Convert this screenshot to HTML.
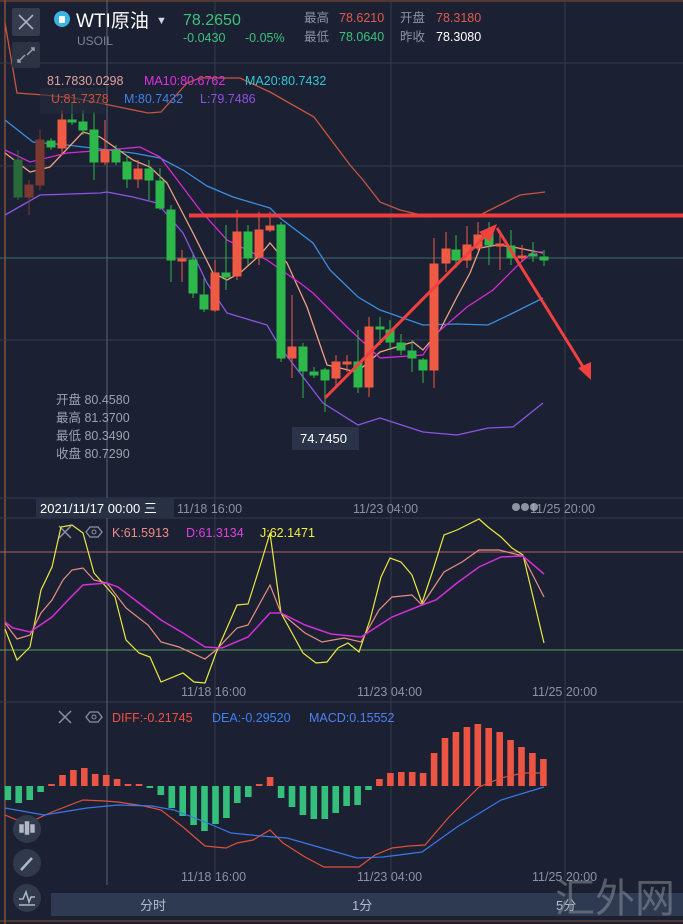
<!DOCTYPE html>
<html><head><meta charset="utf-8"><style>
html,body{margin:0;padding:0;background:#1b2132;width:683px;height:924px;overflow:hidden}
svg{display:block}
text{font-family:"Liberation Sans","Noto Sans CJK SC",sans-serif}
</style></head><body>
<svg width="683" height="924" viewBox="0 0 683 924" xmlns="http://www.w3.org/2000/svg">
<rect width="683" height="924" fill="#1b2132"/>
<!-- borders -->
<line x1="5" y1="0" x2="5" y2="924" stroke="#b8683a" stroke-width="1"/>
<line x1="0" y1="1" x2="683" y2="1" stroke="#8a5030" stroke-width="1"/>
<line x1="0" y1="921" x2="683" y2="921" stroke="#8a5030" stroke-width="1"/>
<!-- grid -->
<g stroke="#323b4e" stroke-width="1">
<line x1="0" y1="63" x2="683" y2="63"/>
<line x1="0" y1="166" x2="683" y2="166"/>
<line x1="0" y1="340" x2="683" y2="340"/>
<line x1="0" y1="498" x2="683" y2="498"/>
<line x1="0" y1="518" x2="683" y2="518"/>
<line x1="0" y1="702" x2="683" y2="702"/>
<line x1="215" y1="0" x2="215" y2="880"/>
<line x1="391" y1="0" x2="391" y2="880"/>
<line x1="565" y1="0" x2="565" y2="880"/>
</g>
<line x1="107" y1="0" x2="107" y2="885" stroke="#5a6478" stroke-width="1"/>
<line x1="0" y1="258" x2="683" y2="258" stroke="#3e6a6a" stroke-width="1"/>
<!-- bollinger & MA -->
<g fill="none" stroke-width="1.3">
<polyline stroke="#c8553e" points="5,23 17,93 44,95 74,98 109,105 148,113 161,112 187,83 200,78 240,78 270,92 314,117 335,145 350,165 363,180 380,202 400,210 430,217 455,215 480,215 500,205 520,195 545,192"/>
<polyline stroke="#3a8ee0" points="5,120 33,142 67,145 100,149 133,153 160,158 183,170 207,186 233,197 270,208 280,218 313,243 330,270 358,297 380,310 423,325 457,324 488,325 513,313 543,298"/>
<polyline stroke="#8a55e6" points="5,215 40,195 100,193 107,192 133,197 157,203 183,233 207,283 227,313 267,325 280,347 323,403 358,425 380,418 423,432 457,435 488,428 513,427 543,403"/>
<polyline stroke="#f0a080" points="5,153 30,172 50,167 83,132 100,137 133,160 150,167 167,183 193,233 213,273 227,280 240,273 260,255 270,243 287,263 307,307 327,365 357,372 380,352 413,342 423,350 440,330 457,297 470,273 480,248 497,245 513,247 543,253"/>
<polyline stroke="#d828d8" points="5,150 30,162 67,153 107,150 140,147 160,157 200,210 227,240 267,260 300,283 313,293 347,327 380,358 423,355 437,333 467,307 493,290 520,263 533,252 543,252"/>
</g>
<!-- candles -->
<g stroke-width="1">
<g fill="#2a6a3a" stroke="#2a6a3a"><line x1="18" y1="150" x2="18" y2="200"/><rect x="14" y="160" width="8" height="37"/></g>
<g fill="#7a3a32" stroke="#7a3a32"><line x1="29" y1="180" x2="29" y2="215"/><rect x="25" y="185" width="8" height="12"/><line x1="40" y1="130" x2="40" y2="190"/><rect x="36" y="140" width="8" height="45"/></g>
<g fill="#2db84a" stroke="#2db84a">
<line x1="51" y1="138" x2="51" y2="150"/><rect x="47" y="141" width="8" height="6"/>
<line x1="72" y1="103" x2="72" y2="125"/><rect x="68" y="120" width="8" height="2"/>
<line x1="83" y1="110" x2="83" y2="135"/><rect x="79" y="122" width="8" height="8"/>
<line x1="94" y1="112" x2="94" y2="180"/><rect x="90" y="130" width="8" height="32"/>
<line x1="116" y1="145" x2="116" y2="165"/><rect x="112" y="150" width="8" height="12"/>
<line x1="127" y1="155" x2="127" y2="188"/><rect x="123" y="162" width="8" height="17"/>
<line x1="149" y1="160" x2="149" y2="200"/><rect x="145" y="169" width="8" height="11"/>
<line x1="160" y1="168" x2="160" y2="210"/><rect x="156" y="181" width="8" height="27"/>
<line x1="171" y1="205" x2="171" y2="282"/><rect x="167" y="210" width="8" height="50"/>
<line x1="193" y1="255" x2="193" y2="298"/><rect x="189" y="260" width="8" height="33"/>
<line x1="204" y1="278" x2="204" y2="312"/><rect x="200" y="295" width="8" height="14"/>
<line x1="226" y1="225" x2="226" y2="290"/><rect x="222" y="273" width="8" height="4"/>
<line x1="248" y1="225" x2="248" y2="265"/><rect x="244" y="232" width="8" height="26"/>
<line x1="281" y1="222" x2="281" y2="362"/><rect x="277" y="225" width="8" height="133"/>
<line x1="303" y1="343" x2="303" y2="398"/><rect x="299" y="347" width="8" height="24"/>
<line x1="314" y1="367" x2="314" y2="378"/><rect x="310" y="372" width="8" height="3"/>
<line x1="325" y1="368" x2="325" y2="412"/><rect x="321" y="370" width="8" height="10"/>
<line x1="358" y1="330" x2="358" y2="393"/><rect x="354" y="362" width="8" height="25"/>
<line x1="380" y1="317" x2="380" y2="345"/><rect x="376" y="327" width="8" height="2"/>
<line x1="390" y1="320" x2="390" y2="350"/><rect x="386" y="330" width="8" height="12"/>
<line x1="401" y1="334" x2="401" y2="355"/><rect x="397" y="343" width="8" height="7"/>
<line x1="412" y1="340" x2="412" y2="372"/><rect x="408" y="351" width="8" height="7"/>
<line x1="423" y1="358" x2="423" y2="383"/><rect x="419" y="360" width="8" height="10"/>
<line x1="456" y1="235" x2="456" y2="268"/><rect x="452" y="250" width="8" height="10"/>
<line x1="489" y1="222" x2="489" y2="265"/><rect x="485" y="230" width="8" height="15"/>
<line x1="511" y1="230" x2="511" y2="265"/><rect x="507" y="246" width="8" height="12"/>
<line x1="533" y1="242" x2="533" y2="262"/><rect x="529" y="254" width="8" height="2"/>
<line x1="544" y1="250" x2="544" y2="266"/><rect x="540" y="257" width="8" height="3"/>
</g>
<g fill="#ef5a45" stroke="#ef5a45">
<line x1="62" y1="110" x2="62" y2="155"/><rect x="58" y="120" width="8" height="28"/>
<line x1="105" y1="120" x2="105" y2="165"/><rect x="101" y="150" width="8" height="12"/>
<line x1="138" y1="160" x2="138" y2="188"/><rect x="134" y="169" width="8" height="10"/>
<line x1="182" y1="250" x2="182" y2="282"/><rect x="178" y="259" width="8" height="2"/>
<line x1="215" y1="260" x2="215" y2="312"/><rect x="211" y="273" width="8" height="37"/>
<line x1="237" y1="210" x2="237" y2="280"/><rect x="233" y="232" width="8" height="44"/>
<line x1="259" y1="212" x2="259" y2="265"/><rect x="255" y="230" width="8" height="27"/>
<line x1="270" y1="212" x2="270" y2="232"/><rect x="266" y="226" width="8" height="4"/>
<line x1="292" y1="295" x2="292" y2="378"/><rect x="288" y="347" width="8" height="11"/>
<line x1="336" y1="355" x2="336" y2="385"/><rect x="332" y="362" width="8" height="16"/>
<line x1="347" y1="355" x2="347" y2="372"/><rect x="343" y="362" width="8" height="2"/>
<line x1="369" y1="317" x2="369" y2="397"/><rect x="365" y="327" width="8" height="60"/>
<line x1="434" y1="238" x2="434" y2="388"/><rect x="430" y="264" width="8" height="106"/>
<line x1="446" y1="232" x2="446" y2="272"/><rect x="442" y="249" width="8" height="14"/>
<line x1="467" y1="226" x2="467" y2="268"/><rect x="463" y="245" width="8" height="15"/>
<line x1="478" y1="222" x2="478" y2="250"/><rect x="474" y="235" width="8" height="13"/>
<line x1="500" y1="232" x2="500" y2="270"/><rect x="496" y="244" width="8" height="2"/>
<line x1="522" y1="245" x2="522" y2="262"/><rect x="518" y="256" width="8" height="2"/>
</g>
</g>
<!-- annotations -->
<line x1="189" y1="215.5" x2="683" y2="215.5" stroke="#f03c3c" stroke-width="4"/>
<line x1="325" y1="398" x2="488" y2="233" stroke="#f04040" stroke-width="3"/>
<polygon points="497,224 479,232 490,242" fill="#f04040"/>
<line x1="497" y1="228" x2="585" y2="370" stroke="#f04040" stroke-width="3"/>
<polygon points="591,380 578,368 591,362" fill="#f04040"/>
<!-- header -->
<rect x="12" y="8" width="28" height="28" rx="2" fill="#343c4e"/>
<path d="M19 15 L33 29 M33 15 L19 29" stroke="#a8b0c0" stroke-width="1.6"/>
<rect x="12" y="42" width="28" height="26" rx="2" fill="#2c3444"/>
<path d="M18 62 L25 55 M34 48 L27 55 M21 62 L18 62 L18 59 M31 48 L34 48 L34 51" stroke="#98a0b0" stroke-width="1.5" fill="none"/>
<circle cx="62" cy="19" r="8" fill="#3ab4e4"/>
<rect x="59" y="16" width="6" height="7" rx="1" fill="#fff"/>
<text x="76" y="27" font-size="19" fill="#ffffff">WTI原油</text>
<text x="156" y="24" font-size="11" fill="#d0d4dc">▼</text>
<text x="77" y="45" font-size="12" fill="#7a8496">USOIL</text>
<text x="183" y="25" font-size="16" fill="#3cc27a">78.2650</text>
<text x="183" y="42" font-size="12.5" fill="#3cc27a">-0.0430</text>
<text x="245" y="42" font-size="12.5" fill="#3cc27a">-0.05%</text>
<g font-size="12.5">
<text x="304" y="22" fill="#8a92a4">最高</text><text x="339" y="22" fill="#e05a50">78.6210</text>
<text x="400" y="22" fill="#8a92a4">开盘</text><text x="436" y="22" fill="#e05a50">78.3180</text>
<text x="304" y="41" fill="#8a92a4">最低</text><text x="339" y="41" fill="#3cc27a">78.0640</text>
<text x="400" y="41" fill="#8a92a4">昨收</text><text x="436" y="41" fill="#ffffff">78.3080</text>
</g>
<rect x="40" y="88" width="65" height="26" fill="#242b3c" opacity="0.6"/>
<g font-size="12.5">
<text x="47" y="85" fill="#e0a0a0">81.7830.0298</text>
<text x="144" y="85" fill="#e030e0">MA10:80.6762</text>
<text x="245" y="85" fill="#30c8d8">MA20:80.7432</text>
<text x="51" y="103" fill="#d05040">U:81.7378</text>
<text x="124" y="103" fill="#4080e8">M:80.7432</text>
<text x="200" y="103" fill="#9050e0">L:79.7486</text>
</g>
<g font-size="12.5" fill="#9aa2b2">
<text x="56" y="404">开盘 80.4580</text>
<text x="56" y="422">最高 81.3700</text>
<text x="56" y="440">最低 80.3490</text>
<text x="56" y="458">收盘 80.7290</text>
</g>
<rect x="292" y="427" width="67" height="23" fill="#2a3347"/>
<text x="300" y="443" font-size="13" fill="#ffffff">74.7450</text>
<!-- time axis -->
<rect x="36" y="498" width="138" height="20" fill="#283044"/>
<text x="40" y="513" font-size="13" fill="#ffffff">2021/11/17 00:00 三</text>
<g font-size="12.5" fill="#8a92a4">
<text x="177" y="513">11/18 16:00</text>
<text x="353" y="513">11/23 04:00</text>
<text x="530" y="513">11/25 20:00</text>
<text x="181" y="696">11/18 16:00</text>
<text x="357" y="696">11/23 04:00</text>
<text x="532" y="696">11/25 20:00</text>
<text x="181" y="881">11/18 16:00</text>
<text x="357" y="881">11/23 04:00</text>
<text x="532" y="881">11/25 20:00</text>
</g>
<g fill="#aab0bc" opacity="0.8"><circle cx="516" cy="507" r="4"/><circle cx="525" cy="507" r="4"/><circle cx="534" cy="507" r="4"/></g>
<!-- KDJ -->
<line x1="0" y1="552" x2="683" y2="552" stroke="#b05a68" stroke-width="1"/>
<line x1="0" y1="650" x2="683" y2="650" stroke="#5aa060" stroke-width="1"/>
<path d="M59 526 L71 538 M71 526 L59 538" stroke="#8a92a4" stroke-width="1.5"/>
<polygon points="90,527 98,527 102,532 98,537 90,537 86,532" fill="none" stroke="#8a92a4" stroke-width="1.3"/>
<circle cx="94" cy="532" r="2" fill="none" stroke="#8a92a4"/>
<g font-size="12.5">
<text x="112" y="537" fill="#f08a8a">K:61.5913</text>
<text x="186" y="537" fill="#e040e0">D:61.3134</text>
<text x="260" y="537" fill="#f0f040">J:62.1471</text>
</g>
<g fill="none" stroke-width="1.2">
<polyline stroke="#e8e840" points="5,629 17,660 30,647 41,590 52,567 61,527 72,525 83,533 94,573 115,597 126,640 139,653 150,657 161,682 183,673 194,682 205,683 216,653 237,605 248,604 261,563 270,533 281,613 303,653 316,663 327,662 338,648 348,643 359,652 370,620 381,577 390,558 401,562 412,575 422,603 433,570 444,535 457,530 479,519 488,527 501,537 512,548 523,555 544,643"/>
<polyline stroke="#e89080" points="5,623 17,639 30,635 41,613 52,600 63,580 72,570 83,568 94,580 107,583 126,608 148,625 161,642 179,647 205,659 216,650 237,628 248,625 270,585 281,613 305,633 322,642 344,638 361,642 379,610 392,597 412,595 422,605 444,572 462,562 479,550 499,550 523,556 544,597"/>
<polyline stroke="#d030d8" stroke-width="1.5" points="5,622 13,628 30,632 52,617 70,598 83,585 107,583 118,587 139,603 161,620 183,633 205,647 222,648 248,637 270,613 281,613 305,625 331,634 361,637 392,617 422,605 436,600 457,583 479,567 501,557 523,556 544,574"/>
</g>
<!-- MACD -->
<path d="M59 711 L71 723 M71 711 L59 723" stroke="#8a92a4" stroke-width="1.5"/>
<polygon points="90,712 98,712 102,717 98,722 90,722 86,717" fill="none" stroke="#8a92a4" stroke-width="1.3"/>
<circle cx="94" cy="717" r="2" fill="none" stroke="#8a92a4"/>
<g font-size="12.5">
<text x="112" y="722" fill="#f05040">DIFF:-0.21745</text>
<text x="212" y="722" fill="#4080f0">DEA:-0.29520</text>
<text x="309" y="722" fill="#5080f0">MACD:0.15552</text>
</g>
<g fill="#34c07a">
<rect x="4.5" y="786" width="6.6" height="14"/><rect x="15.4" y="786" width="6.6" height="17"/><rect x="26.4" y="786" width="6.6" height="14"/><rect x="37.3" y="786" width="6.6" height="6"/>
<rect x="146.6" y="786" width="6.6" height="2"/><rect x="157.5" y="786" width="6.6" height="9"/><rect x="168.5" y="786" width="6.6" height="22"/><rect x="179.4" y="786" width="6.6" height="30"/><rect x="190.3" y="786" width="6.6" height="39"/><rect x="201.2" y="786" width="6.6" height="45"/><rect x="212.2" y="786" width="6.6" height="38"/><rect x="223.1" y="786" width="6.6" height="32"/><rect x="234" y="786" width="6.6" height="17"/><rect x="245" y="786" width="6.6" height="11"/>
<rect x="277.8" y="786" width="6.6" height="12"/><rect x="288.7" y="786" width="6.6" height="21"/><rect x="299.6" y="786" width="6.6" height="29"/><rect x="310.5" y="786" width="6.6" height="33"/><rect x="321.5" y="786" width="6.6" height="33"/><rect x="332.4" y="786" width="6.6" height="27"/><rect x="343.3" y="786" width="6.6" height="20"/><rect x="354.3" y="786" width="6.6" height="19"/><rect x="365.2" y="786" width="6.6" height="4"/>
</g>
<g fill="#ec5444">
<rect x="48.2" y="784" width="6.6" height="2"/><rect x="59.2" y="775" width="6.6" height="11"/><rect x="70.1" y="770" width="6.6" height="16"/><rect x="81" y="768" width="6.6" height="18"/><rect x="91.9" y="774" width="6.6" height="12"/><rect x="102.9" y="775" width="6.6" height="11"/><rect x="113.8" y="779" width="6.6" height="7"/><rect x="124.7" y="784" width="6.6" height="2"/><rect x="135.7" y="784" width="6.6" height="2"/>
<rect x="255.9" y="784" width="6.6" height="2"/><rect x="266.8" y="777" width="6.6" height="9"/>
<rect x="376.1" y="779" width="6.6" height="7"/><rect x="387.1" y="773" width="6.6" height="13"/><rect x="398" y="772" width="6.6" height="14"/><rect x="408.9" y="772" width="6.6" height="14"/><rect x="419.8" y="773" width="6.6" height="13"/><rect x="430.8" y="753" width="6.6" height="33"/><rect x="441.7" y="738" width="6.6" height="48"/><rect x="452.6" y="732" width="6.6" height="54"/><rect x="463.6" y="727" width="6.6" height="59"/><rect x="474.5" y="724" width="6.6" height="62"/><rect x="485.4" y="728" width="6.6" height="58"/><rect x="496.4" y="732" width="6.6" height="54"/><rect x="507.3" y="740" width="6.6" height="46"/><rect x="518.2" y="747" width="6.6" height="39"/><rect x="529.1" y="753" width="6.6" height="33"/><rect x="540.1" y="759" width="6.6" height="27"/>
</g>
<g fill="none" stroke-width="1.2">
<polyline stroke="#e05038" points="5,815 17,820 30,822 52,812 83,800 105,801 118,802 144,806 161,810 183,827 205,846 226,848 237,843 253,840 270,830 283,843 305,857 324,867 348,867 359,867 375,855 392,848 409,846 425,845 449,817 479,787 501,778 523,773 544,773"/>
<polyline stroke="#3a78e8" points="5,808 44,815 87,808 118,805 152,806 174,810 205,822 231,833 261,836 287,838 322,848 357,858 383,857 422,852 457,827 501,800 544,787"/>
</g>
<!-- left tool buttons -->
<g fill="#343d50" opacity="0.9"><circle cx="27" cy="829" r="14"/><circle cx="27" cy="863" r="14"/><circle cx="27" cy="898" r="14"/></g>
<g stroke="#b0b8c6" stroke-width="1.5" fill="#b0b8c6">
<rect x="20" y="825" width="3" height="7"/><rect x="25.5" y="822" width="3" height="12"/><rect x="31" y="825" width="3" height="7"/>
<path d="M21 870 L32 858" stroke-width="2.5"/>
<path d="M19 899 L23 899 L26 892 L29 902 L31 897 L35 897" fill="none"/><path d="M19 905 L35 905" fill="none"/>
</g>
<!-- bottom bar -->
<rect x="51" y="893" width="632" height="23" fill="#2d3a52"/>
<g font-size="13" fill="#b4bccb">
<text x="140" y="910">分时</text>
<text x="352" y="910">1分</text>
<text x="556" y="910">5分</text>
</g>
<text x="555" y="912" font-size="40" fill="#8a8f98" opacity="0.55" font-family="Liberation Sans,'Noto Sans CJK SC',sans-serif">汇外网</text>
</svg>
</body></html>
